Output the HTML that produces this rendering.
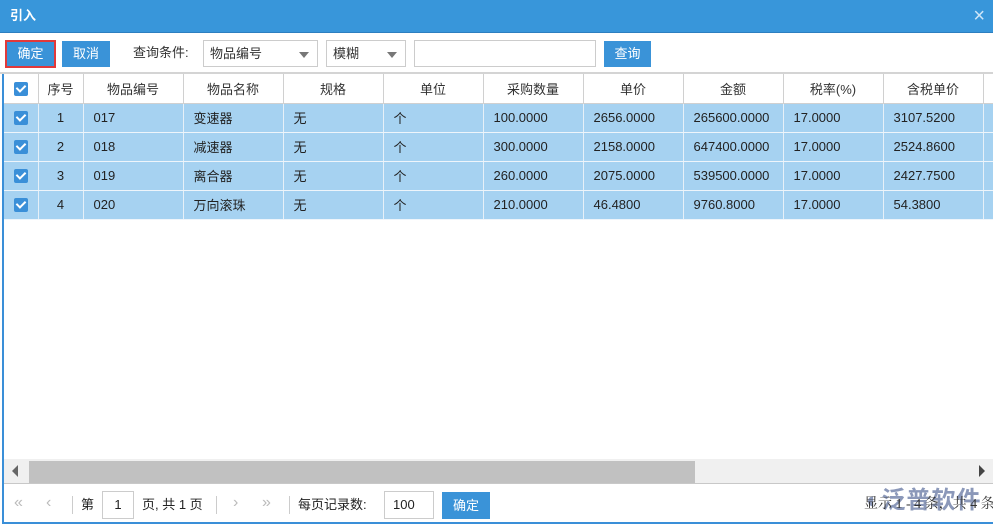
<!DOCTYPE html><html><head><meta charset="utf-8"><style>
*{margin:0;padding:0;box-sizing:border-box}
body{width:993px;height:526px;overflow:hidden;background:#fff;font-family:"Liberation Sans","Noto Sans CJK SC",sans-serif;font-size:13px;color:#222;position:relative}
.a{position:absolute;white-space:nowrap}
.title{left:0;top:0;width:993px;height:33px;background:#3896da;border-bottom:1px solid #2d7fc0;color:#fff;font-weight:bold;font-size:13px;line-height:32px;padding-left:10px}
.btn{background:#3a93d8;color:#fff;text-align:center;line-height:26px;height:26px}
.sel{border:1px solid #ccc;height:27px;line-height:25px;padding-left:6px;color:#333}
.tri{position:absolute;right:8px;top:11px;border-left:5px solid transparent;border-right:5px solid transparent;border-top:6px solid #777}
table{border-collapse:collapse;table-layout:fixed}
td{height:29px;border-right:1px solid #ddd;border-bottom:1px solid #eef5fb;padding-left:10px;white-space:nowrap;overflow:hidden}
tr.h td{text-align:center;padding:0;border-right:1px solid #d0d0d0;border-bottom:1px solid #d0d0d0;background:#fff;color:#333}
tr.r td{background:#a6d2f1;border-right:1px solid #e6f0f8}
td.c{text-align:center;padding:0}
.cb{display:inline-block;width:14px;height:14px;background:#3a8fd8;border-radius:2px;vertical-align:middle;position:relative}
.cb:after{content:"";position:absolute;left:4px;top:1px;width:4px;height:7px;border:solid #fff;border-width:0 2px 2px 0;transform:rotate(45deg)}
.pg{color:#bbb;font-size:16px}
</style></head><body>
<div class="a title">引入<span style="position:absolute;right:8px;top:0;font-weight:normal;font-size:20px;color:#cfe6f8">×</span></div>
<div class="a btn" style="left:5px;top:40px;width:51px;height:28px;border:2px solid #e2393a;line-height:24px">确定</div>
<div class="a btn" style="left:62px;top:41px;width:48px">取消</div>
<div class="a" style="left:133px;top:45px;color:#333;line-height:16px">查询条件:</div>
<div class="a sel" style="left:203px;top:40px;width:115px">物品编号<span class="tri"></span></div>
<div class="a sel" style="left:326px;top:40px;width:80px">模糊<span class="tri"></span></div>
<div class="a sel" style="left:414px;top:40px;width:182px"></div>
<div class="a btn" style="left:604px;top:41px;width:47px">查询</div>
<div class="a" style="left:0;top:72px;width:993px;height:2px;background:#d4d4d4"></div>
<div class="a" style="left:2px;top:74px;width:2px;height:450px;background:#3a8fd8"></div>
<div class="a" style="left:2px;top:522px;width:991px;height:2px;background:#3a8fd8"></div>
<div class="a" style="left:4px;top:74px;width:989px;height:386px;overflow:hidden">
<table style="width:1100px">
<colgroup><col style="width:34px"><col style="width:45px"><col style="width:100px"><col style="width:100px"><col style="width:100px"><col style="width:100px"><col style="width:100px"><col style="width:100px"><col style="width:100px"><col style="width:100px"><col style="width:100px"><col style="width:121px"></colgroup>
<tr class="h"><td><span class="cb"></span></td><td>序号</td><td>物品编号</td><td>物品名称</td><td>规格</td><td>单位</td><td>采购数量</td><td>单价</td><td>金额</td><td>税率(%)</td><td>含税单价</td><td></td></tr>
<tr class="r"><td class="c"><span class="cb"></span></td><td class="c">1</td><td>017</td><td>变速器</td><td>无</td><td>个</td><td>100.0000</td><td>2656.0000</td><td>265600.0000</td><td>17.0000</td><td>3107.5200</td><td></td></tr>
<tr class="r"><td class="c"><span class="cb"></span></td><td class="c">2</td><td>018</td><td>减速器</td><td>无</td><td>个</td><td>300.0000</td><td>2158.0000</td><td>647400.0000</td><td>17.0000</td><td>2524.8600</td><td></td></tr>
<tr class="r"><td class="c"><span class="cb"></span></td><td class="c">3</td><td>019</td><td>离合器</td><td>无</td><td>个</td><td>260.0000</td><td>2075.0000</td><td>539500.0000</td><td>17.0000</td><td>2427.7500</td><td></td></tr>
<tr class="r"><td class="c"><span class="cb"></span></td><td class="c">4</td><td>020</td><td>万向滚珠</td><td>无</td><td>个</td><td>210.0000</td><td>46.4800</td><td>9760.8000</td><td>17.0000</td><td>54.3800</td><td></td></tr>
</table></div>
<div class="a" style="left:4px;top:459px;width:989px;height:25px;background:#f0f0f0;border-bottom:1px solid #c8c8c8"></div>
<div class="a" style="left:12px;top:465px;border-top:6px solid transparent;border-bottom:6px solid transparent;border-right:6px solid #666"></div>
<div class="a" style="left:29px;top:461px;width:666px;height:22px;background:#c1c1c1"></div>
<div class="a" style="left:979px;top:465px;border-top:6px solid transparent;border-bottom:6px solid transparent;border-left:6px solid #444"></div>
<div class="a pg" style="left:14px;top:494px">«</div>
<div class="a pg" style="left:46px;top:494px">‹</div>
<div class="a" style="left:72px;top:496px;width:1px;height:18px;background:#ccc"></div>
<div class="a" style="left:81px;top:497px;line-height:16px">第</div>
<div class="a" style="left:102px;top:491px;width:32px;height:28px;border:1px solid #ccc;text-align:center;line-height:26px">1</div>
<div class="a" style="left:142px;top:497px;line-height:16px">页, 共 1 页</div>
<div class="a" style="left:216px;top:496px;width:1px;height:18px;background:#ccc"></div>
<div class="a pg" style="left:233px;top:494px">›</div>
<div class="a pg" style="left:262px;top:494px">»</div>
<div class="a" style="left:289px;top:496px;width:1px;height:18px;background:#ccc"></div>
<div class="a" style="left:298px;top:497px;line-height:16px">每页记录数:</div>
<div class="a" style="left:384px;top:491px;width:50px;height:28px;border:1px solid #ccc;line-height:26px;padding-left:8px">100</div>
<div class="a btn" style="left:442px;top:492px;width:48px;height:27px;line-height:27px">确定</div>
<div class="a" style="left:866px;top:480px;font-size:24px;color:#6f7fa8;opacity:.8;font-weight:bold;letter-spacing:1px">◐泛普软件</div>
<div class="a" style="left:864px;top:497px;font-size:14px;line-height:16px;color:#333;font-family:'Liberation Serif','Noto Serif CJK SC',serif">显示 1 - 4 条，共 4 条</div>
</body></html>
